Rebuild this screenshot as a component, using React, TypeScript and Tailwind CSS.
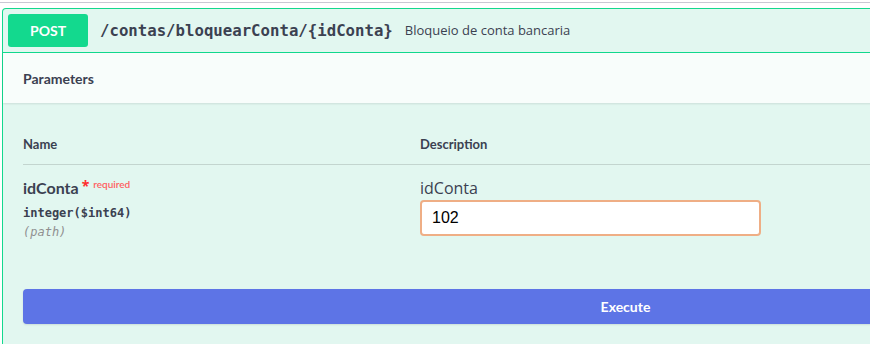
import React from "react";

const sans = "font-['Lato','Noto_Sans',sans-serif]";
const mono = "font-['DejaVu_Sans_Mono','Liberation_Mono',monospace]";

export default function App() {
  return (
    <div className="h-[345px] w-full overflow-hidden bg-white">
      <div className="w-[1260px]">
        <div className="mt-[2px] h-[6px] border-t border-[#c9c8d3]" />
        <div className="ml-[2px] w-[1247px] rounded-tl-[4px] border border-b-0 border-[#13d98e] bg-[#e2f7f0]">
          {/* summary */}
          <div className="flex h-[44px] items-center border-b border-[#13d98e] pl-[5px]">
            <span className={`${sans} flex h-[33px] w-[80px] items-center justify-center rounded-[3px] bg-[#13d98e] text-[14px] font-bold text-white`}>
              POST
            </span>
            <span className={`${mono} ml-[12px] text-[15.7px] font-bold text-[#3b4151]`}>/contas/bloquearConta/{"{idConta}"}</span>
            <span className="ml-[12px] font-['Open_Sans',sans-serif] text-[13px] text-[#3b4151]">Bloqueio de conta bancaria</span>
          </div>

          {/* parameters header */}
          <div className="flex h-[50px] items-center bg-[#f8fdfb] px-[20px] shadow-[0_1px_2px_rgba(0,0,0,0.1)]">
            <h4 className={`${sans} text-[14px] font-bold text-[#3b4151]`}>Parameters</h4>
          </div>

          {/* table */}
          <div className="px-[20px] pt-[20px]">
            <div className={`${sans} flex border-b border-[#c3d5cf] pb-[11px] pt-[12px] text-[13px] font-bold leading-[18px] text-[#3b4151]`}>
              <div className="w-[397px]">Name</div>
              <div>Description</div>
            </div>
            <div className="flex pt-[12px]">
              <div className="w-[397px]">
                <div className="flex items-start">
                  <span className={`${sans} text-[16px] font-bold leading-[22px] text-[#3b4151]`}>idConta</span>
                  <span className="ml-[3px] text-[14px] font-bold leading-[18px] text-[#ff2f2f]">*</span>
                  <span className={`${sans} ml-[4px] text-[10px] font-semibold leading-[14px] text-[#ff6060]`}>required</span>
                </div>
                <div className={`${mono} mt-[5px] text-[12px] font-semibold text-[#3b4151]`}>integer($int64)</div>
                <div className={`${mono} mt-[1px] text-[12px] italic text-[#909090]`}>(path)</div>
              </div>
              <div>
                <div className="font-['Open_Sans',sans-serif] text-[16px] leading-[22px] text-[#3b4151]">idConta</div>
                <input
                  defaultValue="102"
                  className="mt-[1px] h-[36px] w-[341px] rounded-[4px] border-2 border-[#efae85] bg-white px-[10px] font-['Liberation_Sans',Arial,sans-serif] text-[16px] text-black outline-none"
                />
              </div>
            </div>
            <div className="pb-[20px] pt-[48px]">
              <button className={`${sans} h-[35px] w-full rounded-[4px] bg-[#5d74e6] text-[14px] font-bold text-white shadow-[0_1px_2px_rgba(0,0,0,0.1)]`}>
                Execute
              </button>
            </div>
          </div>
        </div>
      </div>
    </div>
  );
}
